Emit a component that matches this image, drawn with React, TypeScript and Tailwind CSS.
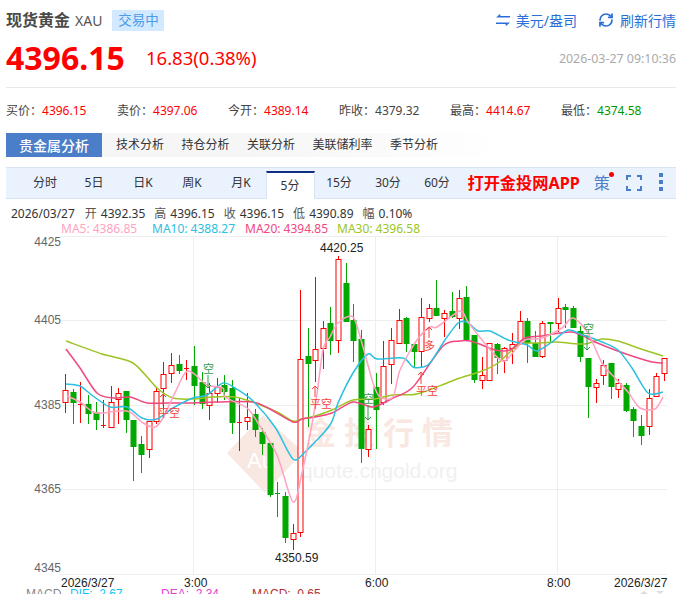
import { RefreshCw } from "lucide-react";

// x, wick top, wick bottom, body top, body bottom, red (1) / green (0)
const candles: number[][] = [
  [65, 374, 413, 390, 402, 1], [73, 389, 424, 392, 403, 0], [80, 382, 423, 404, 404, 1],
  [88, 395, 424, 404, 414, 0], [96, 402, 430, 412, 420, 0], [103, 400, 428, 425, 425, 1],
  [111, 386, 427, 402, 427, 1], [118, 388, 424, 393, 399, 1], [126, 391, 433, 391, 420, 0],
  [133, 420, 481, 420, 447, 0], [141, 436, 473, 444, 455, 0], [149, 421, 458, 421, 449, 1],
  [156, 388, 424, 391, 421, 1], [163, 362, 410, 374, 388, 1], [171, 353, 383, 365, 373, 1],
  [179, 355, 374, 364, 371, 0], [186, 360, 380, 368, 368, 1], [194, 346, 405, 366, 386, 0],
  [202, 372, 409, 382, 404, 0], [209, 383, 420, 393, 405, 1], [217, 378, 403, 387, 393, 1],
  [224, 375, 400, 385, 392, 0], [232, 380, 434, 388, 423, 0], [239, 398, 451, 422, 422, 1],
  [247, 393, 430, 417, 421, 1], [255, 409, 437, 414, 430, 0], [262, 428, 455, 432, 444, 0],
  [270, 443, 497, 443, 495, 0], [277, 482, 517, 493, 493, 0], [285, 492, 543, 496, 538, 0],
  [293, 524, 550, 533, 539, 1], [300, 290, 537, 359, 532, 1], [308, 328, 427, 356, 364, 0],
  [315, 277, 382, 349, 360, 1], [323, 321, 369, 328, 348, 1], [330, 307, 355, 323, 341, 0],
  [338, 256, 353, 259, 340, 1], [346, 263, 322, 283, 322, 0], [353, 304, 362, 320, 341, 0],
  [361, 330, 463, 339, 449, 0], [368, 425, 457, 429, 449, 1], [376, 373, 449, 387, 410, 0],
  [383, 341, 405, 366, 402, 1], [391, 328, 384, 340, 364, 1], [399, 309, 344, 320, 343, 1],
  [406, 317, 352, 318, 344, 0], [414, 344, 368, 344, 352, 0], [421, 298, 367, 317, 351, 1],
  [429, 304, 322, 308, 318, 1], [436, 280, 316, 308, 316, 0], [444, 310, 337, 313, 318, 1],
  [452, 292, 318, 311, 317, 0], [459, 290, 329, 298, 318, 1], [466, 286, 340, 297, 340, 0],
  [474, 335, 383, 335, 380, 0], [482, 357, 389, 375, 380, 1], [489, 343, 381, 343, 380, 1],
  [497, 343, 374, 344, 358, 0], [504, 347, 373, 348, 360, 1], [512, 333, 364, 344, 348, 1],
  [520, 311, 345, 321, 343, 1], [527, 318, 363, 321, 343, 0], [535, 331, 357, 343, 357, 0],
  [542, 321, 358, 323, 356, 1], [550, 322, 343, 322, 324, 0], [558, 298, 332, 308, 323, 1],
  [565, 304, 328, 307, 310, 0], [573, 306, 328, 308, 328, 0], [580, 326, 362, 331, 357, 0],
  [588, 358, 418, 358, 387, 0], [596, 379, 403, 383, 387, 1], [603, 360, 385, 365, 375, 1],
  [611, 363, 399, 363, 387, 0], [618, 379, 398, 383, 389, 1], [626, 383, 412, 385, 411, 0],
  [633, 407, 437, 409, 421, 0], [641, 415, 445, 426, 436, 0], [649, 389, 435, 398, 426, 1],
  [656, 373, 397, 376, 396, 1], [664, 358, 381, 358, 373, 1],
];

const ma30 =
  "66,341 102,354 133,363 157,388 173,398 193,399 213,397 235,397 255,403 277,412 293,421 302,419 315,416 332,410 353,400 375,399 393,395 417,394 447,383 460,378 482,371 498,363 510,352 520,344 538,343 557,342 568,343 585,344 602,339 618,341 638,348 663,356";
const ma20 =
  "66,349 80,368 97,393 113,398 130,397 147,403 167,403 193,403 215,402 252,402 268,408 293,422 302,419 315,417 332,413 353,402 373,407 393,398 413,387 443,346 460,341 470,341 482,345 495,350 510,350 525,338 542,336 572,332 595,342 615,350 635,357 652,362 663,363";
const ma10 =
  "66,384 80,386 93,396 110,407 127,407 142,418 157,419 173,408 193,398 207,395 223,383 235,388 252,400 275,427 293,459 305,452 330,425 338,403 353,373 368,354 377,359 403,358 413,367 423,367 430,363 445,340 458,323 467,322 478,331 490,331 508,340 527,345 537,351 552,342 568,330 583,335 602,342 618,350 632,368 648,393 663,392";
const ma5 =
  "67,396 80,402 93,412 103,413 118,411 130,412 143,423 155,427 163,418 173,397 185,373 193,373 207,385 223,388 225,397 247,408 258,423 277,455 293,502 302,473 315,407 323,350 330,337 338,323 353,317 363,347 373,383 380,397 393,397 400,370 417,340 430,327 437,327 460,311 468,322 482,340 497,357 505,361 515,350 525,340 542,338 562,328 573,318 588,333 602,363 615,378 628,392 640,408 655,409 663,397";

const gridY = [320, 405, 489, 574];
const gridX = [193.5, 375.5, 557.5];
const tabs = ["分时", "5日", "日K", "周K", "月K", "5分", "15分", "30分", "60分"];
const subTabs = ["技术分析", "持仓分析", "关联分析", "美联储利率", "季节分析"];
const quote = [
  ["开", "4392.35"],
  ["高", "4396.15"],
  ["收", "4396.15"],
  ["低", "4390.89"],
  ["幅", "0.10%"],
];

// catmull-rom through the points so the MA lines bend like the chart's smooth lines
function smooth(points: string) {
  const p = points.split(" ").map((s) => s.split(",").map(Number));
  let d = `M${p[0][0]},${p[0][1]}`;
  for (let i = 0; i < p.length - 1; i++) {
    const a = p[i - 1] || p[i];
    const b = p[i];
    const c = p[i + 1];
    const e = p[i + 2] || c;
    const k = 1 / 7;
    d += ` C${b[0] + (c[0] - a[0]) * k},${b[1] + (c[1] - a[1]) * k} ${c[0] - (e[0] - b[0]) * k},${c[1] - (e[1] - b[1]) * k} ${c[0]},${c[1]}`;
  }
  return d;
}

function Stat({ label, value, color }: { label: string; value: string; color: string }) {
  return (
    <div className="w-[111px] shrink-0 text-[12px] text-[#444]">
      {label}：<span className={color}>{value}</span>
    </div>
  );
}

function Arrow({ x, y1, y2, color }: { x: number; y1: number; y2: number; color: string }) {
  const up = y1 > y2;
  const d = up ? 3 : -3;
  return (
    <g stroke={color} strokeWidth="1" fill="none">
      <line x1={x} y1={y1} x2={x} y2={y2} />
      <polyline points={`${x - 3},${y2 + d} ${x},${y2} ${x + 3},${y2 + d}`} />
    </g>
  );
}

function Chart() {
  const red = "#f4433c";
  const green = "#2e9e4a";
  return (
    <svg viewBox="0 236 685 358" className="block h-[358px] w-[685px]">
      {/* watermark */}
      <polygon points="227,453 263,415 303,452 265,493" fill="#f9e7e2" />
      <text x="247" y="468" fontSize="22" fill="#fff" fontFamily="Liberation Sans">Au</text>
      <g fontSize="31" fontWeight="700" fill="#f9e7e2" fontFamily="Noto Sans CJK SC">
        <text x="305" y="444">金</text>
        <text x="344" y="444">投</text>
        <text x="383" y="444">行</text>
        <text x="422" y="444">情</text>
      </g>
      <text x="301" y="478" fontSize="21" fill="#f0f0f0" fontFamily="Liberation Sans">quote.cngold.org</text>

      {/* grid */}
      <line x1="61" y1="236.5" x2="667" y2="236.5" stroke="#eee" />
      {gridY.map((y) => (
        <line key={y} x1="61" y1={y + 0.5} x2="667" y2={y + 0.5} stroke="#eee" />
      ))}
      {gridX.map((x) => (
        <line key={x} x1={x} y1="236" x2={x} y2="574" stroke="#eee" />
      ))}

      {candles.map(([x, wt, wb, bt, bb, up]) => {
        const color = up ? "#f00" : "#00a800";
        return (
          <g key={x}>
            <line x1={x + 0.5} y1={wt} x2={x + 0.5} y2={wb} stroke={color} />
            {bt === bb ? (
              <line x1={x - 2} y1={bt + 0.5} x2={x + 3} y2={bt + 0.5} stroke={color} />
            ) : up ? (
              <rect x={x - 2} y={bt + 0.5} width="5" height={bb - bt} fill="#fff" stroke={color} />
            ) : (
              <rect x={x - 2.5} y={bt} width="6" height={bb - bt} fill={color} />
            )}
          </g>
        );
      })}

      <g fill="none" strokeLinejoin="round" strokeWidth="1.5">
        <path d={smooth(ma30)} stroke="#9cc524" />
        <path d={smooth(ma20)} stroke="#f0487f" />
        <path d={smooth(ma10)} stroke="#2cc0e0" />
        <path d={smooth(ma5)} stroke="#ffa3c0" />
      </g>

      {/* trade markers */}
      <g fontSize="11" fontFamily="Noto Sans CJK SC">
        <Arrow x={163} y1={405} y2={394} color={red} />
        <text x="158" y="417" fill={red}>平空</text>
        <text x="203" y="373" fill={green}>空</text>
        <Arrow x={208} y1={375} y2={388} color={green} />
        <Arrow x={315} y1={397} y2={386} color={red} />
        <text x="310" y="408" fill={red}>平空</text>
        <text x="363" y="403" fill={green}>空</text>
        <Arrow x={368} y1={405} y2={420} color={green} />
        <Arrow x={421} y1={384} y2={372} color={red} />
        <text x="416" y="395" fill={red}>平空</text>
        <Arrow x={429} y1={338} y2={327} color={red} />
        <text x="424" y="350" fill={red}>多</text>
        <text x="583" y="333" fill={green}>空</text>
        <Arrow x={587} y1={335} y2={350} color={green} />
      </g>

      <g fontSize="12" fontFamily="Liberation Sans">
        <g fill="#666" textAnchor="end">
          <text x="61" y="246">4425</text>
          <text x="61" y="324">4405</text>
          <text x="61" y="409">4385</text>
          <text x="61" y="493">4365</text>
          <text x="61" y="572">4345</text>
        </g>
        <g fill="#222">
          <text x="320" y="252">4420.25</text>
          <text x="275" y="562">4350.59</text>
          <text x="61" y="587">2026/3/27</text>
          <text x="184" y="587">3:00</text>
          <text x="365" y="587">6:00</text>
          <text x="547" y="587">8:00</text>
          <text x="614" y="587">2026/3/27</text>
        </g>
        <text x="26" y="598" fill="#888">MACD</text>
        <text x="70" y="598" fill="#10c4f0" xmlSpace="preserve">DIF:  2.67</text>
        <text x="161" y="598" fill="#e040d0" xmlSpace="preserve">DEA:  2.34</text>
        <text x="252" y="598" fill="#b03030" xmlSpace="preserve">MACD:  0.65</text>
      </g>
      <polygon points="640,594 644,591 648,594" fill="#ddd" />
      <polygon points="656,591 664,591 660,594" fill="#ddd" />
    </svg>
  );
}

export default function App() {
  return (
    <div className="h-[594px] w-[685px] overflow-hidden bg-white font-['Noto_Sans','Noto_Sans_CJK_SC',sans-serif]">
      <div className="flex h-[39px] items-center pl-[6px] pr-[9px] pt-[1px]">
        <span className="text-[16px] font-bold text-[#4a4a4a]">现货黄金</span>
        <span className="ml-[5px] text-[14px] text-[#555]">XAU</span>
        <span className="ml-[10px] flex h-[21px] w-[52px] items-center justify-center bg-[#d2e9ff] text-[13.5px] text-[#4a9be8]">
          交易中
        </span>
        <div className="ml-auto flex items-center text-[14px] text-[#2a6fd8]">
          <svg viewBox="0 0 14 12" className="mr-[6px] h-[12px] w-[14px]" fill="#2a6fd8">
            <path d="M4 0 0 3.5h14V2H4.5Z" />
            <path d="M10 12l4-3.5H0V10h9.5Z" />
          </svg>
          <span>美元/盎司</span>
          <RefreshCw className="ml-[21px] mr-[6px] h-[16px] w-[16px]" strokeWidth={2.6} />
          <span>刷新行情</span>
        </div>
      </div>

      <div className="flex h-[48px] items-center pb-[10px] pl-[6px] pr-[9px]">
        <span className="w-[140px] text-[32px] leading-none font-bold text-[#f00]">4396.15</span>
        <span className="text-[18.5px] text-[#f00]">16.83(0.38%)</span>
        <span className="ml-auto pt-[2px] text-[12.4px] text-[#aaa]">2026-03-27 09:10:36</span>
      </div>

      <div className="ml-[6px] mr-[9px] h-[46px] border-t border-[#e8e8e8]">
        <div className="flex h-[45px] items-center">
          <Stat label="买价" value="4396.15" color="text-[#f00]" />
          <Stat label="卖价" value="4397.06" color="text-[#f00]" />
          <Stat label="今开" value="4389.14" color="text-[#f00]" />
          <Stat label="昨收" value="4379.32" color="text-[#444]" />
          <Stat label="最高" value="4414.67" color="text-[#f00]" />
          <Stat label="最低" value="4374.58" color="text-[#090]" />
        </div>
      </div>

      <div className="ml-[6px] flex h-[24px] w-[500px] items-center bg-gradient-to-r from-[#f6f6f6] via-[#f6f6f6] to-white">
        <div className="flex h-full w-[96px] items-center justify-center bg-[#4b7ec8] text-[14px] font-medium text-white">
          贵金属分析
        </div>
        <div className="ml-[14px] flex gap-[17.5px] text-[12px] text-[#333]">
          {subTabs.map((t) => (
            <span key={t}>{t}</span>
          ))}
        </div>
      </div>

      <div className="ml-[6px] mr-[9px] mt-[10px] flex h-[32px] items-stretch border-y border-[#d8e3f3] bg-[#eaf2fd] pl-[14.5px]">
        {tabs.map((t) => (
          <div
            key={t}
            className={
              t === "5分"
                ? "mt-[3px] -mb-px flex w-[49px] items-center justify-center border-x border-t-2 border-x-[#d8e3f3] border-t-[#0f2f80] bg-white text-[12px] text-[#333]"
                : "flex w-[49px] items-center justify-center text-[12px] text-[#333]"
            }
          >
            {t}
          </div>
        ))}
        <span className="ml-[6px] self-center text-[16.2px] font-bold text-[#f00]">打开金投网APP</span>
        <div className="relative ml-[14px] self-center text-[16px] text-[#4b7ec8]">
          策
          <span className="absolute -right-[4px] top-[1px] h-[5px] w-[5px] rounded-full bg-[#f00]" />
        </div>
        <svg viewBox="0 0 16 16" className="ml-[16px] h-[16px] w-[16px] self-center" fill="none" stroke="#4b7ec8" strokeWidth="2">
          <path d="M5 1H1v4M11 1h4v4M1 11v4h4M15 11v4h-4" />
        </svg>
        <div className="mb-[2px] ml-[17px] flex flex-col gap-[3px] self-center">
          <span className="h-[4px] w-[4px] bg-[#4b7ec8]" />
          <span className="h-[4px] w-[4px] bg-[#4b7ec8]" />
          <span className="h-[4px] w-[4px] bg-[#4b7ec8]" />
        </div>
      </div>

      <div className="mt-[7px] flex h-[15px] items-center gap-[9px] pl-[11px] text-[12px] text-[#333]">
        <span className="mr-[1px]">2026/03/27</span>
        {quote.map(([label, value]) => (
          <span key={label} className="flex gap-[4px]">
            <span className="text-[#555]">{label}</span>
            <span>{value}</span>
          </span>
        ))}
      </div>
      <div className="flex h-[15px] items-center pl-[61px] text-[12px]">
        <span className="w-[91px] text-[#ffa3c0]">MA5: 4386.85</span>
        <span className="w-[93px] text-[#2cc0e0]">MA10: 4388.27</span>
        <span className="w-[92px] text-[#f0487f]">MA20: 4394.85</span>
        <span className="text-[#9cc524]">MA30: 4396.58</span>
      </div>
      <Chart />
    </div>
  );
}
